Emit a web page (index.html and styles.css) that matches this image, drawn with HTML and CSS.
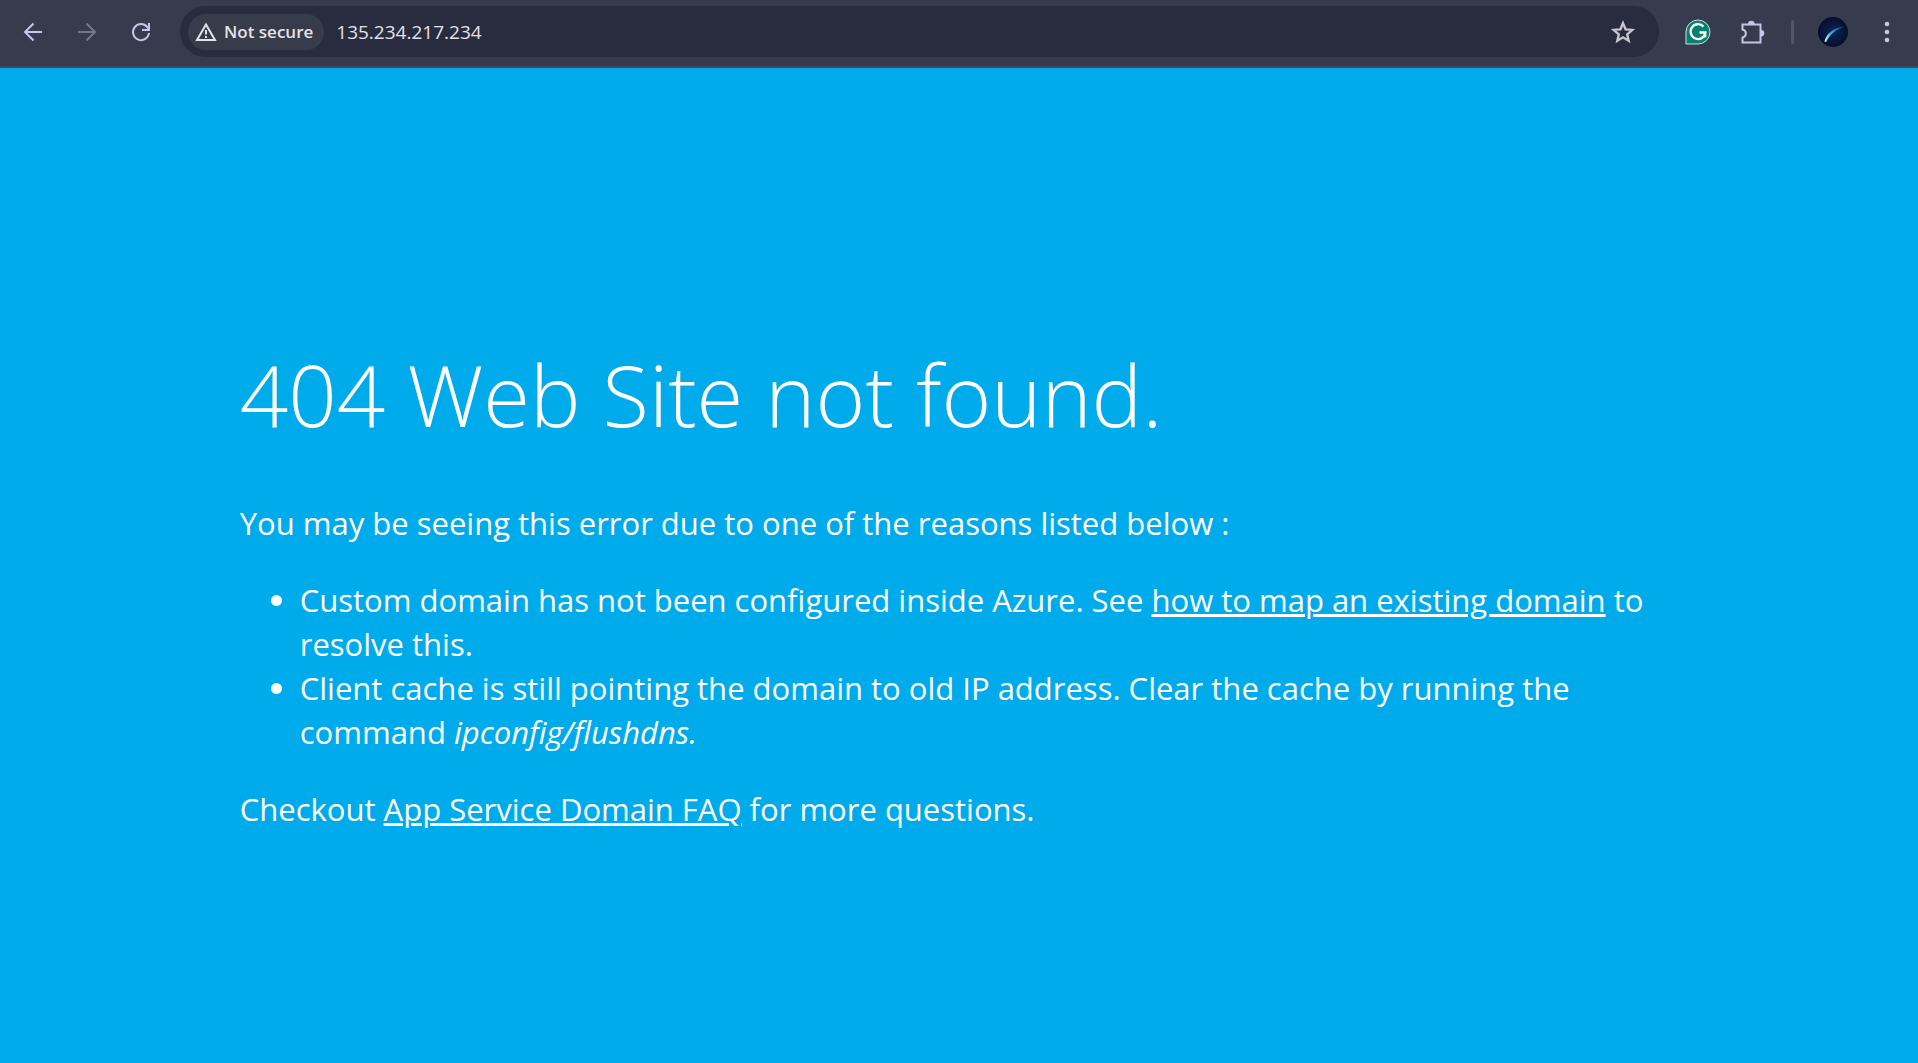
FILE: index.html
```html
<!DOCTYPE html>
<html lang="en">

<head>
    <meta charset="utf-8">
    <title>404 Web Site not found</title>
    <link rel="stylesheet" href="styles.css">
</head>

<body>
    <header class="toolbar">
        <nav class="nav-buttons">
            <button class="icon-button" aria-label="Back">
                <svg width="24" height="24" viewBox="0 0 24 24">
                    <path class="line" d="M21 12H4M12.5 3.500L4 12l8.500 8.500" />
                </svg>
            </button>
            <button class="icon-button" aria-label="Forward" disabled>
                <svg width="24" height="24" viewBox="0 0 24 24">
                    <path class="line" d="M3 12h17M11.500 3.500L20 12l-8.500 8.500" />
                </svg>
            </button>
            <button class="icon-button" aria-label="Reload">
                <svg width="24" height="24" viewBox="0 0 24 24">
                    <path class="line" d="M20 13a8 8 0 1 1-1.800-6L20 9" />
                    <path class="fill" d="M21 3v8h-8V9h6V3z" />
                </svg>
            </button>
        </nav>

        <div class="omnibox">
            <button class="chip">
                <svg width="24" height="24" viewBox="0 0 24 24">
                    <path class="line" d="M12 4.500L21 20H3z" />
                    <path class="fill" d="M11 10h2v4.500h-2zM11 16h2v2h-2z" />
                </svg>
                Not secure
            </button>
            <input class="address" type="text" aria-label="Address" value="135.234.217.234" spellcheck="false">
            <button class="icon-button star" aria-label="Bookmark this page">
                <svg width="28" height="28" viewBox="0 0 24 24">
                    <path class="line" d="M12 4.400l2.200 5.300 5.800.5-4.400 3.800 1.300 5.600-4.900-3-4.900 3 1.300-5.600L4 10.200l5.800-.5z" />
                </svg>
            </button>
        </div>

        <div class="actions">
            <button class="icon-button" aria-label="Grammarly">
                <svg width="26" height="26" viewBox="0 0 26 26">
                    <path d="M1 25V13A12 12 0 1 1 13 25z" fill="#088070" stroke="#d3dedd" stroke-width="1" />
                    <path d="M18.500 7.600A7.400 7.400 0 1 0 20.400 13.500H14.500M20.200 13.500v5" fill="none" stroke="#fff" stroke-width="2.300" />
                </svg>
            </button>
            <button class="icon-button" aria-label="Extensions">
                <svg width="26" height="26" viewBox="0 0 26 26">
                    <path class="line" d="M3.500 5.500H21.500V23.500H3.500V18.500C8 17.500 8 11.500 3.500 10.500z" />
                    <path class="fill" d="M9 5a3.300 3.300 0 0 1 6.600 0zM22 11a3.300 3.300 0 0 1 0 6.600z" />
                </svg>
            </button>
            <span class="divider"></span>
            <button class="icon-button" aria-label="Profile">
                <svg width="30" height="30" viewBox="0 0 30 30">
                    <defs>
                        <radialGradient id="sky">
                            <stop offset="0" stop-color="#09295b" />
                            <stop offset="1" stop-color="#070d2b" />
                        </radialGradient>
                        <linearGradient id="comet" x1="0" y1="1" x2="1" y2="0">
                            <stop offset="0" stop-color="#e8fbff" />
                            <stop offset=".4" stop-color="#49b2e5" />
                            <stop offset="1" stop-color="#0b3b75" />
                        </linearGradient>
                    </defs>
                    <circle cx="15" cy="15" r="15" fill="url(#sky)" />
                    <path d="M6.500 24.500C8 18 13 11 27 9.500C18 12.500 12 17 8 25z" fill="url(#comet)" />
                </svg>
            </button>
            <button class="icon-button" aria-label="Menu">
                <svg width="24" height="24" viewBox="0 0 24 24">
                    <circle class="fill" cx="12" cy="4" r="2.300" />
                    <circle class="fill" cx="12" cy="12" r="2.300" />
                    <circle class="fill" cx="12" cy="20" r="2.300" />
                </svg>
            </button>
        </div>
    </header>

    <main class="page">
        <div class="content">
            <h1>404 Web Site not found.</h1>
            <p>You may be seeing this error due to one of the reasons listed below :</p>
            <ul>
                <li>Custom domain has not been configured inside Azure. See <a href="#">how to map an existing domain</a> to resolve this.</li>
                <li>Client cache is still pointing the domain to old IP address. Clear the cache by running the command <i>ipconfig/flushdns.</i></li>
            </ul>
            <p>Checkout <a href="#">App Service Domain FAQ</a> for more questions.</p>
        </div>
    </main>
</body>

</html>
```
FILE: styles.css
```css
* {
    box-sizing: border-box;
}

body {
    margin: 0;
    min-height: 100vh;
    display: flex;
    flex-direction: column;
    background: #00abec;
    color: #fff;
    font-family: "Open Sans", "Noto Sans", sans-serif;
}

/* browser bar */
.toolbar {
    display: flex;
    align-items: center;
    padding: 6px 4px 9px 6px;
    background: #373b4e;
    border-bottom: 2px solid #4a4a55;
}

.nav-buttons,
.actions {
    display: flex;
    align-items: center;
}

.icon-button {
    width: 54px;
    height: 48px;
    padding: 0;
    border: none;
    background: none;
    color: #c5c6e6;
    display: flex;
    align-items: center;
    justify-content: center;
}

.icon-button:disabled {
    color: #757789;
}

.line {
    fill: none;
    stroke: currentColor;
    stroke-width: 2;
}

.fill {
    fill: currentColor;
}

.omnibox {
    flex: 1;
    display: flex;
    align-items: center;
    margin: 0 12px;
    padding: 0 9px 0 8px;
    height: 51px;
    border-radius: 26px;
    background: #292b3e;
}

.chip {
    display: flex;
    align-items: center;
    gap: 6px;
    height: 36px;
    padding: 0 11px 0 6px;
    border: none;
    border-radius: 18px;
    background: #373c4b;
    color: #e3e2ea;
    font: 600 17px "Open Sans", sans-serif;
    white-space: nowrap;
}

.address {
    flex: 1;
    min-width: 0;
    margin-left: 12px;
    padding: 0;
    border: none;
    outline: none;
    background: none;
    color: #e3e2ea;
    font: 19px "Open Sans", sans-serif;
}

.star {
    color: #c7c6cc;
}

.divider {
    width: 3px;
    height: 24px;
    margin: 0 12px;
    border-radius: 2px;
    background: #53566b;
}

/* error page */
.page {
    flex: 1;
    display: flex;
    align-items: center;
    padding-top: 67px;
}

.content {
    width: 75%;
    margin: 0 auto;
    font-size: 31px;
    line-height: 44px;
}

h1 {
    margin: 0 0 47px;
    font-size: 85px;
    font-weight: 300;
    line-height: 120px;
}

p,
ul {
    margin: 0 0 33px;
}

ul {
    padding-left: 60px;
}

a {
    color: #fff;
    text-decoration-thickness: 3px;
}
```
